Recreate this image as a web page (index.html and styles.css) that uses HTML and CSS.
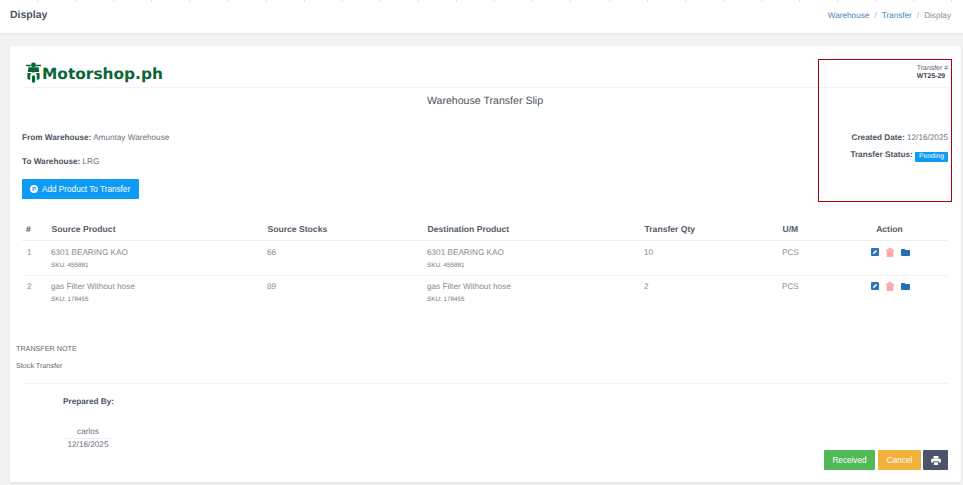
FILE: index.html
```html
<!DOCTYPE html>
<html lang="en">
<head>
<meta charset="utf-8">
<title>Display</title>
<link rel="stylesheet" href="styles.css">
</head>
<body>
<header class="topbar">
  <h1 class="page-title">Display</h1>
  <nav class="crumbs"><a>Warehouse</a><span class="sep">/</span><a>Transfer</a><span class="sep">/</span><span class="current">Display</span></nav>
</header>
<main class="page">
  <section class="card">
    <div class="brand-row">
      <div class="logo">
        <svg class="logo-mark" viewBox="0 0 16 22" width="15" height="21">
          <path d="M0 3.500h5.500M10.500 3.500H16" stroke="#0a6636" stroke-width="1.500" fill="none"/>
          <circle cx="8" cy="3" r="2.600" fill="#0a6636"/>
          <path d="M2.500 5.500h11l.5 5H2z" fill="#0a6636"/>
          <path d="M1.500 11.500h13v6.500l-3 1V14.500a3.500 3.500 0 0 0-7 0V19l-3-1z" fill="#0a6636"/>
          <rect x="6.300" y="14" width="3.400" height="8" rx="1.700" fill="#0a6636"/>
        </svg>
        <span class="logo-text">Motorshop.ph</span>
      </div>
      <div class="slip-no"><div>Transfer #</div><strong>WT25-29</strong></div>
    </div>
    <h2 class="slip-title">Warehouse Transfer Slip</h2>
    <div class="info">
      <div class="info-col">
        <p class="info-line"><b>From Warehouse:</b> Amuntay Warehouse</p>
        <p class="info-line"><b>To Warehouse:</b> LRG</p>
        <button class="btn-add"><span class="p-icon">P</span>Add Product To Transfer</button>
      </div>
      <div class="info-col right">
        <p class="info-line"><b>Created Date:</b> 12/16/2025</p>
        <p class="info-line"><b>Transfer Status:</b> <span class="badge">Pending</span></p>
      </div>
    </div>
    <div class="highlight"></div>
    <table class="items">
      <colgroup>
        <col class="c1"><col class="c2"><col class="c3"><col class="c4"><col class="c5"><col class="c6"><col class="c7">
      </colgroup>
      <thead>
        <tr><th>#</th><th>Source Product</th><th>Source Stocks</th><th>Destination Product</th><th>Transfer Qty</th><th>U/M</th><th class="center">Action</th></tr>
      </thead>
      <tbody>
        <tr>
          <td class="num-olive">1</td>
          <td>6301 BEARING KAO<small>SKU: 455881</small></td>
          <td>66</td>
          <td>6301 BEARING KAO<small>SKU: 455881</small></td>
          <td>10</td>
          <td>PCS</td>
          <td class="center"><span class="actions">
            <svg class="ic" viewBox="0 0 8 8" width="8" height="8"><rect width="8" height="8" rx="1.200" fill="#2f74b5"/><path d="M2 6l.3-1.400L5 1.900 6.100 3 3.400 5.700z" fill="#fff"/></svg>
            <svg class="ic" viewBox="0 0 8 9" width="8" height="9"><path d="M1 2.500h6V8a1 1 0 0 1-1 1H2a1 1 0 0 1-1-1z" fill="#fbb4b4" stroke="#f79c9c" stroke-width=".7"/><path d="M0 2h8M2.800 1.800V.5h2.400v1.300" fill="none" stroke="#f79c9c"/><path d="M3 4v3.500M5 4v3.500" stroke="#f58e8e" stroke-width=".7"/></svg>
            <svg class="ic" viewBox="0 0 9 7" width="9" height="7"><path d="M0 1a1 1 0 0 1 1-1h2.500l1 1H8a1 1 0 0 1 1 1v4a1 1 0 0 1-1 1H1a1 1 0 0 1-1-1z" fill="#2170b4"/></svg>
          </span></td>
        </tr>
        <tr>
          <td>2</td>
          <td>gas Filter Without hose<small>SKU: 178455</small></td>
          <td>89</td>
          <td>gas Filter Without hose<small>SKU: 178455</small></td>
          <td>2</td>
          <td>PCS</td>
          <td class="center"><span class="actions">
            <svg class="ic" viewBox="0 0 8 8" width="8" height="8"><rect width="8" height="8" rx="1.200" fill="#2f74b5"/><path d="M2 6l.3-1.400L5 1.900 6.100 3 3.400 5.700z" fill="#fff"/></svg>
            <svg class="ic" viewBox="0 0 8 9" width="8" height="9"><path d="M1 2.500h6V8a1 1 0 0 1-1 1H2a1 1 0 0 1-1-1z" fill="#fbb4b4" stroke="#f79c9c" stroke-width=".7"/><path d="M0 2h8M2.800 1.800V.5h2.400v1.300" fill="none" stroke="#f79c9c"/><path d="M3 4v3.500M5 4v3.500" stroke="#f58e8e" stroke-width=".7"/></svg>
            <svg class="ic" viewBox="0 0 9 7" width="9" height="7"><path d="M0 1a1 1 0 0 1 1-1h2.500l1 1H8a1 1 0 0 1 1 1v4a1 1 0 0 1-1 1H1a1 1 0 0 1-1-1z" fill="#2170b4"/></svg>
          </span></td>
        </tr>
      </tbody>
    </table>
    <div class="note">
      <p>TRANSFER NOTE</p>
      <p class="note-body">Stock Transfer</p>
    </div>
    <div class="footer">
      <div class="prepared">
        <b class="prepared-label">Prepared By:</b>
        <div class="prepared-name">carlos</div>
        <div class="prepared-date">12/16/2025</div>
      </div>
      <div class="buttons">
        <button class="btn green">Received</button>
        <button class="btn amber">Cancel</button>
        <button class="btn slate" aria-label="Print">
          <svg viewBox="0 0 12 11" width="10" height="9"><path d="M3 0h6v3H3zM1 3.500h10a1 1 0 0 1 1 1V8H9.500V6.500h-7V8H0V4.500a1 1 0 0 1 1-1zM3.500 7.500h5V11h-5z" fill="#fff"/></svg>
        </button>
      </div>
    </div>
  </section>
</main>
</body>
</html>
```

FILE: styles.css
```css
* { box-sizing: border-box; }
html, body { margin: 0; }
body {
  background: #f3f3f3;
  font-family: "Liberation Sans", Arial, sans-serif;
  font-size: 8.200px;
  color: #6b7280;
  height: 485px;
  overflow: hidden;
  text-rendering: geometricPrecision;
}
p, h1, h2 { margin: 0; }
b, strong { color: #4b5563; }

.topbar {
  height: 33px;
  background-color: #fff;
  background-image: repeating-linear-gradient(to right, transparent 0, transparent 37.100px, #e2e2e2 37.100px, #e2e2e2 38.100px);
  background-size: 100% 2px;
  background-repeat: no-repeat;
  box-shadow: 0 1px 2px rgba(0,0,0,.06);
  display: flex;
  align-items: center;
  justify-content: space-between;
  padding: 0 12px 3px 10px;
}
.page-title { font-size: 10.500px; font-weight: 700; color: #4a5260; }
.crumbs { font-size: 8.200px; color: #8a8f98; display: flex; }
.crumbs a { color: #4d86bd; }
.sep { margin: 0 5px; color: #aeb2b8; }

.page { padding: 13px 2px 0 10px; }
.card {
  position: relative;
  background: #fff;
  height: 436px;
  padding: 0 13px 0 12px;
  box-shadow: 0 1px 2px rgba(0,0,0,.08);
}
.brand-row {
  height: 42px;
  padding-top: 16px;
  border-bottom: 1px solid #f3f3f3;
  display: flex;
  justify-content: space-between;
}
.logo { display: flex; align-items: flex-start; margin-left: 4px; }
.logo-mark { flex: none; }
.logo-text {
  font-family: "DejaVu Sans", sans-serif;
  font-weight: 700;
  font-size: 15.400px;
  line-height: 22px;
  color: #0a6636;
  margin: 1px 0 0 1px;
}
.slip-no { font-size: 6.900px; line-height: 8px; color: #555b66; padding-top: 3px; }
.slip-no strong { display: block; color: #3d4450; }

.slip-title { font-size: 10.600px; font-weight: 400; text-align: center; color: #4d5561; line-height: 13px; margin: 7px 0 0; }

.info { display: flex; justify-content: space-between; margin-top: 25px; height: 68px; }
.info-line { line-height: 10px; margin-bottom: 14px; }
.right { text-align: right; }
.right .info-line { margin-bottom: 7px; }
.badge {
  display: inline-block;
  background: #0d9bf5;
  color: #fff;
  font-size: 6.800px;
  line-height: 10px;
  width: 33px;
  text-align: center;
  border-radius: 1px;
  vertical-align: -1px;
}
.btn-add {
  display: inline-flex;
  align-items: center;
  width: 117px;
  height: 20px;
  padding: 0 0 0 8px;
  border: 0;
  border-radius: 1px;
  background: #0d9bf5;
  color: #fff;
  font: 8.200px "Liberation Sans", Arial, sans-serif;
  margin-top: -2px;
}
.p-icon {
  width: 8px;
  height: 8px;
  border-radius: 50%;
  background: #fff;
  color: #0d9bf5;
  font-size: 6px;
  font-weight: 700;
  line-height: 8px;
  text-align: center;
  margin-right: 4px;
}

.highlight {
  position: absolute;
  left: 808px;
  top: 13px;
  width: 134px;
  height: 143px;
  border: 1px solid #a80010;
  pointer-events: none;
}

.items { width: 926px; border-collapse: collapse; table-layout: fixed; margin-top: 16px; }
.c1 { width: 25px; } .c2 { width: 216px; } .c3 { width: 160px; } .c4 { width: 217px; }
.c5 { width: 138px; } .c6 { width: 63px; } .c7 { width: 107px; }
.items th {
  height: 23px;
  padding: 2px 0 0 4.500px;
  text-align: left;
  color: #565d69;
  font-size: 8.600px;
  font-weight: 700;
  border-bottom: 1px solid #f0f0f0;
}
.items th:first-child { padding-left: 4px; }
.items td {
  height: 35px;
  padding: 7px 0 0 4px;
  vertical-align: top;
  line-height: 10px;
  color: #8a8b8e;
  border-bottom: 1px solid #f3f3f3;
}
.items td:first-child { padding-left: 5px; }
.items tr + tr td { padding-top: 6px; height: 34px; }
.items tr:last-child td { border-bottom: 0; }
.items th.center { text-align: center; padding: 2px 10px 0 0; }
.items td.center { text-align: center; padding: 7px 8px 0 0; }
.items tr + tr td.center { text-align: center; padding: 6px 8px 0 0; }
.items td.num-olive { color: #8f9460; }
.items small { display: block; font-size: 6.300px; line-height: 8px; margin-top: 4px; color: #7a7c80; }
.actions { display: inline-flex; align-items: center; gap: 7px; }
.ic { display: block; }

.note { margin: 35px 0 0 -6px; color: #626873; font-size: 7.200px; line-height: 10px; }
.note-body { margin-top: 7px; }

.footer {
  margin-top: 12px;
  padding-top: 13px;
  border-top: 1px solid #f3f3f3;
  display: flex;
  justify-content: space-between;
  align-items: flex-end;
}
.prepared { width: 50px; margin-left: 41px; text-align: center; color: #6b7280; }
.prepared-label { display: block; white-space: nowrap; line-height: 10px; }
.prepared-name { margin-top: 20px; line-height: 10px; border-bottom: 1px solid #f0f0f0; padding-bottom: 1px; }
.prepared-date { line-height: 12px; }
.buttons { display: flex; gap: 2px; margin-bottom: -19px; }
.btn {
  height: 20px;
  border: 0;
  border-radius: 1px;
  color: #fff;
  padding: 0;
  font: 8.200px "Liberation Sans", Arial, sans-serif;
  display: flex;
  align-items: center;
  justify-content: center;
}
.green { width: 51px; background: #4fb857; margin-right: 1px; }
.amber { width: 43px; background: #f2b13c; }
.slate { width: 25px; background: #4b5468; }
```
